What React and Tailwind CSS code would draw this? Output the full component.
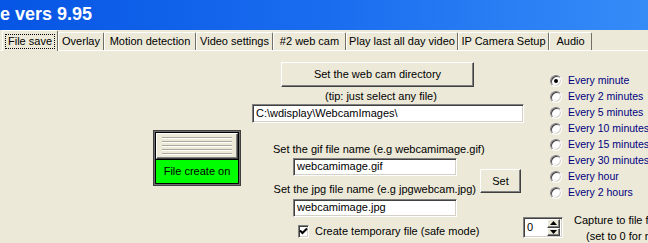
import React from "react";

const tabs = [
  { label: "File save", w: "w-[56px]", active: true },
  { label: "Overlay", w: "w-[46px]" },
  { label: "Motion detection", w: "w-[92px]" },
  { label: "Video settings", w: "w-[77px]" },
  { label: "#2 web cam", w: "w-[73px]" },
  { label: "Play last all day video", w: "w-[112px]" },
  { label: "IP Camera Setup", w: "w-[91px]" },
  { label: "Audio", w: "w-[43px]" },
];

const intervals = [
  "Every minute",
  "Every 2 minutes",
  "Every 5 minutes",
  "Every 10 minutes",
  "Every 15 minutes",
  "Every 30 minutes",
  "Every hour",
  "Every 2 hours",
];

const sunken =
  "bg-white border border-t-[#808080] border-l-[#808080] border-r-white border-b-white shadow-[inset_1px_1px_0_#404040,inset_-1px_-1px_0_#d4d0c8]";
const raised =
  "bg-[#ece9d8] border border-t-white border-l-white border-r-[#404040] border-b-[#404040] shadow-[inset_-1px_-1px_0_#808080]";

function Radio({ checked }) {
  return (
    <span className="relative w-[12px] h-[12px] shrink-0 rounded-full bg-white border border-t-[#808080] border-l-[#808080] border-r-white border-b-white shadow-[inset_1px_1px_0_#404040,inset_-1px_-1px_0_#d4d0c8] flex items-center justify-center">
      {checked && <span className="w-[4px] h-[4px] rounded-full bg-black" />}
    </span>
  );
}

function FileWidget() {
  return (
    <div className="w-[88px] h-[56px] border border-[#404040] bg-[#707070] p-px">
      <div className="w-full h-full border border-black flex flex-col">
        <div className={`h-[26px] ${raised} flex flex-col justify-center gap-[2px] px-[5px]`}>
          {[0, 1, 2, 3, 4].map((i) => (
            <div key={i} className="h-[2px] border-t border-t-[#aca899] border-b border-b-white" />
          ))}
        </div>
        <div className="flex-1 bg-[#00ff00] border-t border-t-black flex items-center justify-center text-black">
          File create on
        </div>
      </div>
    </div>
  );
}

export default function App() {
  return (
    <div className="w-[648px] h-[243px] overflow-hidden bg-[#ece9d8] font-['Liberation_Sans',Arial,sans-serif] text-[11px] text-black">
      {/* title bar */}
      <div className="h-[30px] bg-gradient-to-r from-[#0655e4] via-[#1a6cef] to-[#358cf7] text-white font-bold text-[18px] leading-[28px] whitespace-nowrap">
        e vers 9.95
      </div>

      {/* tabs */}
      <div className="h-[20px] flex items-end pl-[2px]">
        {tabs.map((t) =>
          t.active ? (
            <div
              key={t.label}
              className={`${t.w} h-[21px] -mb-px relative z-10 bg-[#ece9d8] border-t border-l border-t-white border-l-white border-r border-r-[#716f64] rounded-t-[2px] flex items-center justify-center`}
            >
              <span className="border border-dotted border-black px-[2px] leading-[13px]">{t.label}</span>
            </div>
          ) : (
            <div
              key={t.label}
              className={`${t.w} h-[18px] bg-[#ece9d8] border-t border-l border-t-white border-l-white border-r border-r-[#716f64] rounded-t-[2px] flex items-center justify-center whitespace-nowrap`}
            >
              {t.label}
            </div>
          )
        )}
      </div>
      <div className="h-px bg-white" />

      {/* content */}
      <div className="flex h-[192px]">
        <div className="w-[252px] shrink-0 pl-[153px] pt-[79px]">
          <FileWidget />
        </div>

        <div className="w-[272px] shrink-0 flex flex-col">
          <button className={`mt-[11px] ml-[29px] w-[193px] h-[25px] ${raised} text-[11px]`}>
            Set the web cam directory
          </button>
          <div className="mt-[3px] ml-[73px] leading-[13px] whitespace-nowrap">(tip: just select any file)</div>
          <div className={`mt-px h-[19px] w-[272px] ${sunken} px-[3px] leading-[16px] whitespace-nowrap`}>
            C:\wdisplay\WebcamImages\
          </div>

          <div className="flex">
            <div className="ml-[21px] w-[203px] flex flex-col">
              <div className="mt-[20px] leading-[13px] text-right whitespace-nowrap">
                Set the gif file name (e.g webcamimage.gif)
              </div>
              <div className={`mt-[2px] ml-[20px] w-[164px] h-[18px] ${sunken} px-[3px] leading-[15px]`}>
                webcamimage.gif
              </div>
              <div className="mt-[7px] leading-[13px] text-right whitespace-nowrap">
                Set the jpg file name (e.g jpgwebcam.jpg)
              </div>
              <div className={`mt-[3px] ml-[20px] w-[164px] h-[18px] ${sunken} px-[3px] leading-[15px]`}>
                webcamimage.jpg
              </div>
              <div className="mt-[8px] ml-[25px] flex items-center gap-[6px] h-[13px] whitespace-nowrap">
                <span className={`w-[13px] h-[13px] ${sunken} flex items-center justify-center`}>
                  <svg width="9" height="9" viewBox="0 0 9 9">
                    <path d="M1 3.5 L3.5 6 L8 1.5" fill="none" stroke="black" strokeWidth="2" />
                  </svg>
                </span>
                Create temporary file (safe mode)
              </div>
            </div>
            <button className={`ml-[4px] mt-[46px] w-[41px] h-[24px] ${raised} text-[11px]`}>Set</button>
          </div>
        </div>

        <div className="flex-1 min-w-0 flex flex-col">
          <div className="ml-[26px] mt-[22px] flex flex-col">
            {intervals.map((s, i) => (
              <div key={s} className="h-[16px] flex items-center gap-[6px] whitespace-nowrap text-[10.5px] text-[#000080]">
                <Radio checked={i === 0} />
                {s}
              </div>
            ))}
          </div>
          <div className="mt-[16px] -ml-px flex items-start">
            <div className={`w-[40px] h-[21px] shrink-0 ${sunken} flex items-center justify-between pl-[3px] pr-[2px]`}>
              <span>0</span>
              <div className="flex flex-col w-[13px] h-[17px]">
                <div className={`flex-1 ${raised} flex items-center justify-center`}>
                  <svg width="7" height="4" viewBox="0 0 7 4"><path d="M3.5 0 L7 4 L0 4 Z" fill="black" /></svg>
                </div>
                <div className={`flex-1 ${raised} flex items-center justify-center`}>
                  <svg width="7" height="4" viewBox="0 0 7 4"><path d="M0 0 L7 0 L3.5 4 Z" fill="black" /></svg>
                </div>
              </div>
            </div>
            <div className="ml-[11px] -mt-[5px] leading-[16px] whitespace-nowrap">
              <div>Capture to file frequency</div>
              <div className="pl-[12px]">(set to 0 for no capture)</div>
            </div>
          </div>
        </div>
      </div>
    </div>
  );
}
